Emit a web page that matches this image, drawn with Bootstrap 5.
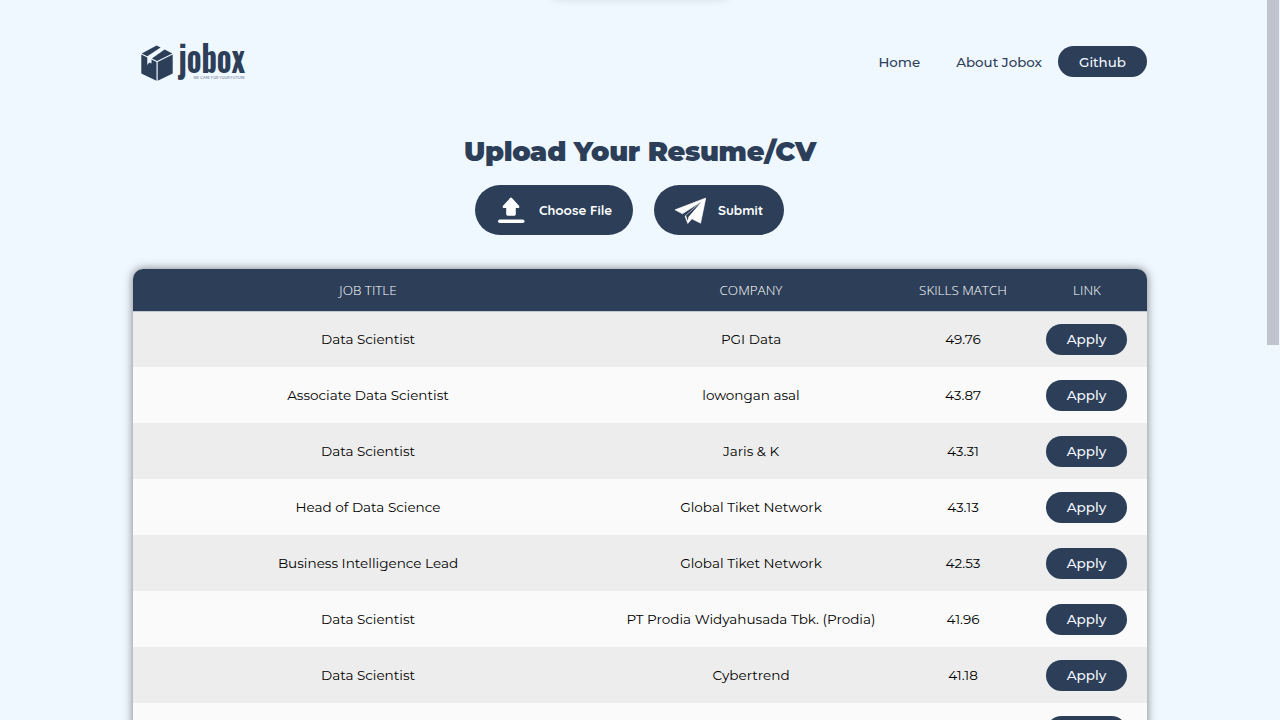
<!DOCTYPE html>
<html lang="en">
<head>
<meta charset="utf-8">
<meta name="viewport" content="width=device-width, initial-scale=1">
<title>Jobox</title>
<link href="https://cdn.jsdelivr.net/npm/bootstrap@5.3.0/dist/css/bootstrap.min.css" rel="stylesheet">
<style>
:root{--navy:#2c3e58}
html,body{height:720px;overflow:hidden}
body{background:#eff7ff;font-family:Montserrat,Inter,sans-serif;font-size:13.55px;color:#111;position:relative}
.page{width:1014px;margin-left:133px}
.topbar{height:123px}
.topbar svg{margin-left:5px;overflow:visible}
.menu{gap:36px}
.menu a{color:var(--navy);text-decoration:none;font-size:13.4px;font-weight:500;padding-top:2px}
.pill{background:var(--navy);color:#f3f8ff!important;font-weight:500;border-radius:16px;display:inline-flex;align-items:center;justify-content:center;height:31px;text-decoration:none}
.menu .pill{width:89px;margin-left:-20px}
.headline{font-weight:900;font-size:27.2px;letter-spacing:-.35px;line-height:36px;margin:11px 0 15px;color:var(--navy)}
.actions{margin-left:342px;gap:21px}
.action{height:50px;border:0;border-radius:25px;background:var(--navy);color:#fff;font-family:Quicksand,Lato,sans-serif;font-weight:700;font-size:13.4px;padding:1px 21px 0;white-space:nowrap}
.action svg{flex:none}
.jobs{margin:34px 0 0;border-radius:10px 10px 0 0;box-shadow:0 0 10px rgba(0,0,0,.5);overflow:hidden}
.jobs table{table-layout:fixed}
.jobs th{background:var(--navy);color:#fff;font:300 13.45px/20px "Open Sans",sans-serif;height:42px;padding:0;border:0;vertical-align:middle}
.jobs td{height:56px;padding:0;border:0;color:#000;background:#fafafa}
.jobs tbody tr:nth-child(odd) td{background:#ededed}
.jobs tbody tr:first-child td{box-shadow:inset 0 1px #c1c7d1}
.jobs .pill{width:81px;margin-right:1px;font-size:13.5px}
.toast-shadow{left:550px;top:-20px;width:180px;height:18px;border-radius:8px;box-shadow:0 0 10px rgba(60,70,90,.2)}
.scroll-thumb{left:1267px;top:0;width:12px;height:345px;background:#c0c4cf}
</style>
</head>
<body>
<div class="position-absolute toast-shadow"></div>
<div class="position-absolute scroll-thumb"></div>
<div class="page">
  <nav class="topbar d-flex align-items-center justify-content-between">
    <svg width="112" height="44" viewBox="138 40 112 44" role="img" aria-label="Jobox">
      <g fill="#2c3e58">
        <path d="M141.3 54.6 147.3 57.5V65l2-2.6 2.2 1V59.6L156.5 62V80.7L141.3 73.4Z"/>
        <path d="M157.7 62 172.7 54.6V73.4L157.7 80.7Z"/>
        <path d="M141.7 53.6 156.6 45.6 160.6 47.6 147.3 56.3Z"/>
        <path d="M164.6 49.4 172.3 53.6 157.1 61 151.9 58.4Z"/>
      </g>
      <text x="178.5" y="73" textLength="66.5" lengthAdjust="spacingAndGlyphs" font-family="Oswald,Roboto" font-weight="700" font-size="38" fill="#2c3e58">jobox</text>
      <text x="193.5" y="79.2" textLength="51.5" lengthAdjust="spacingAndGlyphs" font-family="Inter" font-size="4" fill="#66758b">WE CARE FOR YOUR FUTURE</text>
    </svg>
    <div class="menu d-flex align-items-center">
      <a href="#">Home</a><a href="#">About Jobox</a><a href="#" class="pill">Github</a>
    </div>
  </nav>
  <h1 class="headline text-center">Upload Your Resume/CV</h1>
  <div class="d-flex actions">
    <button class="action d-flex align-items-center" style="width:158px">
      <svg width="30" height="28" viewBox="0 0 30 28" fill="#fff"><path d="M14.3.8q.7-.6 1.4 0L23 8.8q1 1.9-.8 2.2h-2.4v6.3q0 1.4-1.4 1.4h-6.8q-1.4 0-1.4-1.4V11H7.8Q6 10.700 7 8.800Z"/><rect x="2" y="22.5" width="26.500" height="3.6" rx="1.8"/></svg>
      <span style="margin-left:13px">Choose File</span>
    </button>
    <button class="action d-flex align-items-center" style="width:130px">
      <svg width="31" height="28" viewBox="0 0 31 28" fill="#fff"><path d="M30.8 1 25.6 26.2 16.8 21.8 12.8 26.5 10 19.2 26.5 4.5 7.4 16.8 0 12.8Z" stroke="#fff" stroke-width=".6" stroke-linejoin="round"/><path d="M26.5 4.7 13.4 19.9 12.8 23.8 11 18.4Z" fill="#2c3e58"/></svg>
      <span style="margin-left:12px">Submit</span>
    </button>
  </div>
  <div class="jobs">
    <table class="table text-center align-middle mb-0">
      <colgroup><col style="width:470px"><col style="width:296px"><col style="width:128px"><col style="width:120px"></colgroup>
      <thead><tr><th>JOB TITLE</th><th>COMPANY</th><th>SKILLS MATCH</th><th>LINK</th></tr></thead>
      <tbody>
        <tr><td>Data Scientist</td><td>PGI Data</td><td>49.76</td><td><a href="#" class="pill">Apply</a></td></tr>
        <tr><td>Associate Data Scientist</td><td>lowongan asal</td><td>43.87</td><td><a href="#" class="pill">Apply</a></td></tr>
        <tr><td>Data Scientist</td><td>Jaris &amp; K</td><td>43.31</td><td><a href="#" class="pill">Apply</a></td></tr>
        <tr><td>Head of Data Science</td><td>Global Tiket Network</td><td>43.13</td><td><a href="#" class="pill">Apply</a></td></tr>
        <tr><td>Business Intelligence Lead</td><td>Global Tiket Network</td><td>42.53</td><td><a href="#" class="pill">Apply</a></td></tr>
        <tr><td>Data Scientist</td><td>PT Prodia Widyahusada Tbk. (Prodia)</td><td>41.96</td><td><a href="#" class="pill">Apply</a></td></tr>
        <tr><td>Data Scientist</td><td>Cybertrend</td><td>41.18</td><td><a href="#" class="pill">Apply</a></td></tr>
        <tr><td></td><td></td><td></td><td><a href="#" class="pill">&nbsp;</a></td></tr>
      </tbody>
    </table>
  </div>
</div>
</body>
</html>
